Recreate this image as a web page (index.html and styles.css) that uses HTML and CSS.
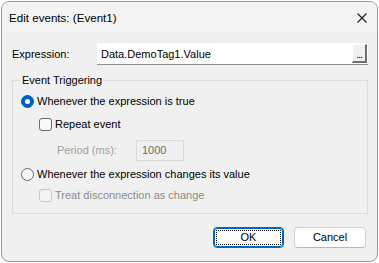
FILE: index.html
```html
<!DOCTYPE html>
<html>
<head>
<meta charset="utf-8">
<link rel="stylesheet" href="styles.css">
</head>
<body>
<div class="window">
  <div class="titlebar">
    <span class="title">Edit events: (Event1)</span>
    <svg class="close" width="10" height="10" viewBox="0 0 10 10"><path d="M0.5 0.5 L9.5 9.5 M9.5 0.5 L0.5 9.5" stroke="#1a1a1a" stroke-width="1.1" fill="none"/></svg>
  </div>
  <div class="content">
    <div class="expr-row">
      <span class="expr-label">Expression:</span>
      <div class="textbox">
        <span class="textbox-value">Data.DemoTag1.Value</span>
        <span class="browse">...</span>
      </div>
    </div>
    <fieldset class="group">
      <legend class="legend">Event Triggering</legend>
      <div class="row row1">
        <span class="radio radio-on"><span class="radio-dot"></span></span>
        <span class="label">Whenever the expression is true</span>
      </div>
      <div class="row row2 indent">
        <span class="check"></span>
        <span class="label">Repeat event</span>
      </div>
      <div class="row row3">
        <span class="period-label">Period (ms):</span>
        <span class="period-input">1000</span>
      </div>
      <div class="row row4">
        <span class="radio"></span>
        <span class="label">Whenever the expression changes its value</span>
      </div>
      <div class="row row5 indent">
        <span class="check check-disabled"></span>
        <span class="label label-disabled">Treat disconnection as change</span>
      </div>
    </fieldset>
    <div class="buttons">
      <button class="btn btn-default"><span class="focus">OK</span></button>
      <button class="btn">Cancel</button>
    </div>
  </div>
</div>
</body>
</html>
```

FILE: styles.css
```css
html, body {
  margin: 0;
  padding: 0;
  background: #ffffff;
}
body {
  font-family: "Liberation Sans", Arial, sans-serif;
  font-size: 11px;
  color: #000;
}
.window {
  box-sizing: border-box;
  width: 377px;
  height: 261px;
  margin: 1px 0 0 1px;
  border: 1px solid #9a9a9a;
  border-radius: 8px;
  overflow: hidden;
  background: #f0f0f0;
}
.titlebar {
  height: 31px;
  background: #f3f3f3;
  display: flex;
  align-items: center;
  justify-content: space-between;
  padding: 0 10px 0 7px;
}
.title {
  font-size: 11.6px;
  line-height: 16px;
}
.close {
  display: block;
}
.content {
  padding: 10px 9px 0 10px;
}
.expr-row {
  display: flex;
  align-items: center;
  height: 22px;
}
.expr-label {
  width: 85px;
  line-height: 16px;
}
.textbox {
  box-sizing: border-box;
  flex: 1;
  height: 22px;
  background: #fff;
  border-bottom: 1px solid #8f8f8f;
  display: flex;
  align-items: center;
  justify-content: space-between;
  padding: 0 1px 0 4px;
}
.textbox-value {
  line-height: 16px;
}
.browse {
  box-sizing: border-box;
  width: 15px;
  height: 19px;
  background: #f0f0f0;
  border-top: 1px solid #fff;
  border-left: 1px solid #fff;
  border-right: 2px solid #6f6f6f;
  border-bottom: 2px solid #6f6f6f;
  font-size: 11px;
  line-height: 18px;
  text-align: center;
  letter-spacing: -1px;
}
.group {
  margin: 7px 0 0 0;
  padding: 3px 0 8px 8px;
  border: 1px solid #dcdcdc;
  min-width: 0;
}
.legend {
  padding: 0 2px;
  margin-left: -1px;
  line-height: 16px;
}
.row {
  display: flex;
  align-items: center;
  height: 20px;
}
.row2 { margin-top: 3px; }
.row3 { margin-top: 6px; }
.row4 { margin-top: 4px; }
.row5 { margin-top: 1px; }
.indent { padding-left: 18px; }
.radio {
  box-sizing: border-box;
  width: 13px;
  height: 13px;
  border-radius: 50%;
  border: 1px solid #6a6a6a;
  background: #f8f8f8;
  display: flex;
  align-items: center;
  justify-content: center;
  margin-right: 3px;
}
.radio-on {
  background: #005fb8;
  border-color: #005fb8;
}
.radio-dot {
  width: 5px;
  height: 5px;
  border-radius: 50%;
  background: #fff;
}
.check {
  box-sizing: border-box;
  width: 13px;
  height: 13px;
  border: 1px solid #6a6a6a;
  border-radius: 3px;
  background: #f9f9f9;
  margin-right: 3px;
}
.check-disabled {
  border-color: #c6c6c6;
  background: #f3f3f3;
}
.label {
  line-height: 16px;
  white-space: nowrap;
}
.label-disabled {
  color: #8c8c8c;
}
.period-label {
  color: #a0a0a0;
  padding-left: 36px;
  width: 79px;
  line-height: 16px;
}
.period-input {
  box-sizing: border-box;
  width: 48px;
  height: 21px;
  border: 1px solid #d9d9d9;
  color: #6d6d6d;
  line-height: 19px;
  padding-left: 5px;
}
.buttons {
  display: flex;
  justify-content: flex-end;
  gap: 10px;
  margin-top: 13px;
  padding-right: 2px;
}
.btn {
  box-sizing: border-box;
  width: 72px;
  height: 21px;
  border: 1px solid #d0d0d0;
  border-bottom-color: #b8b8b8;
  border-radius: 4px;
  background: #fdfdfd;
  font-family: "Liberation Sans", Arial, sans-serif;
  font-size: 11px;
  color: #000;
  padding: 0;
  line-height: 17px;
}
.btn-default {
  width: 71px;
  border: 1px solid #0067c0;
  box-shadow: inset 0 0 0 1px #0067c0;
  padding: 2px;
}
.focus {
  display: block;
  box-sizing: border-box;
  height: 15px;
  border: 1px dotted #000;
  line-height: 13px;
}
```
